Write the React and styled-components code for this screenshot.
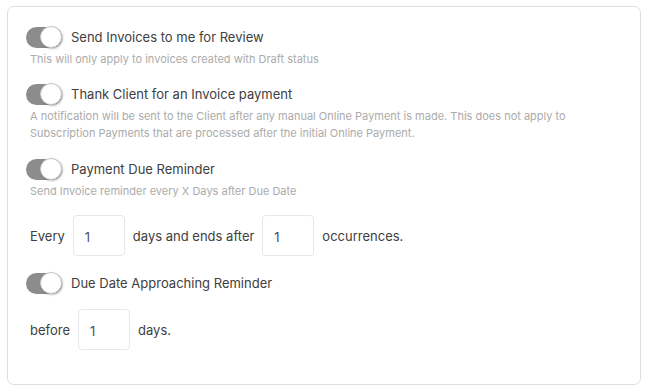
import styled, { createGlobalStyle } from "styled-components";

const Global = createGlobalStyle`
  body {
    margin: 0;
    background: #fff;
    font-family: Inter, "Noto Sans", sans-serif;
  }
`

const Page = styled.div`
  padding: 6px 6px 7px 7px;
`

const Card = styled.div`
  border: 1px solid #dedede;
  border-radius: 7px;
  padding: 19px 20px 34px 18px;
  background: #fff;
`

const Section = styled.div`
  margin-top: ${p => p.$mt || 0}px;
`

const ToggleRow = styled.label`
  display: flex;
  align-items: center;
  gap: 9px;
  height: 22px;
  color: #404040;
  font-size: 13px;
`

const Track = styled.span`
  position: relative;
  display: inline-block;
  width: 36px;
  height: 21px;
  border-radius: 11px;
  background: #8c8c8c;
  flex-shrink: 0;
`

const Knob = styled.span`
  position: absolute;
  top: -0.5px;
  right: 0;
  width: 22px;
  height: 22px;
  box-sizing: border-box;
  border-radius: 50%;
  background: #fff;
  border: 1px solid #c9c9c9;
  box-shadow: 1px 1px 2px rgba(0, 0, 0, 0.25);
`

const Hint = styled.p`
  margin: 3px 0 0 4px;
  font-size: 11px;
  line-height: 17px;
  color: #ababab;
`

const InlineRow = styled.div`
  display: flex;
  align-items: center;
  gap: ${p => p.$gap || 8}px;
  padding-left: 4px;
  font-size: 13px;
  color: #404040;
`

const NumberBox = styled.input`
  width: 52px;
  height: 41px;
  box-sizing: border-box;
  border: 1px solid #e4e7eb;
  border-radius: 4px;
  padding: 2px 0 0 11px;
  font-family: inherit;
  font-size: 13px;
  color: #4b4f6b;
  outline: none;
`

const Toggle = ({ children }) => (
  <ToggleRow>
    <Track>
      <Knob />
    </Track>
    {children}
  </ToggleRow>
)

const App = () => {
  return (
    <Page>
      <Global />
      <Card>
        <Section>
          <Toggle>Send Invoices to me for Review</Toggle>
          <Hint>This will only apply to invoices created with Draft status</Hint>
        </Section>
        <Section $mt={15}>
          <Toggle>Thank Client for an Invoice payment</Toggle>
          <Hint>
            A notification will be sent to the Client after any manual Online Payment is made. This does not apply to
            <br />
            Subscription Payments that are processed after the initial Online Payment.
          </Hint>
        </Section>
        <Section $mt={16}>
          <Toggle>Payment Due Reminder</Toggle>
          <Hint>Send Invoice reminder every X Days after Due Date</Hint>
        </Section>
        <Section $mt={15}>
          <InlineRow>
            Every
            <NumberBox defaultValue="1" />
            days and ends after
            <NumberBox defaultValue="1" />
            occurrences.
          </InlineRow>
        </Section>
        <Section $mt={16}>
          <Toggle>Due Date Approaching Reminder</Toggle>
        </Section>
        <Section $mt={15}>
          <InlineRow>
            before
            <NumberBox defaultValue="1" />
            days.
          </InlineRow>
        </Section>
      </Card>
    </Page>
  )
}

export default App;
